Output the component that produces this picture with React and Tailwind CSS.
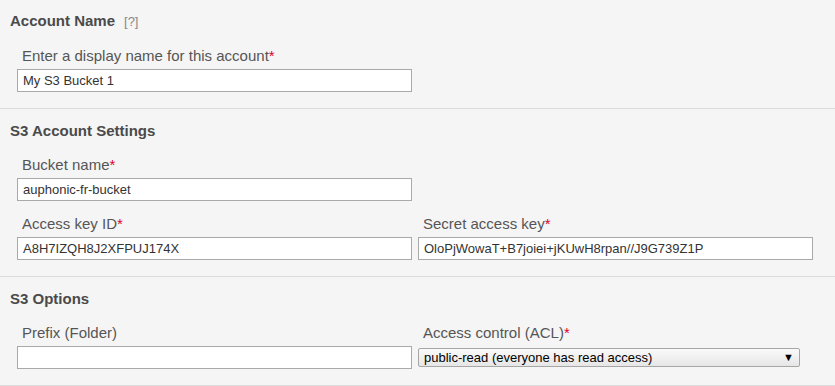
const font = { fontFamily: '"Liberation Sans", Arial, sans-serif' };

function Field({ label, required, value, className = "" }) {
  return (
    <div className={"flex w-[395px] flex-col " + className}>
      <div className="pl-[5px] text-[15px] leading-[20px] text-[#555]">
        {label}
        {required && <span className="text-[#e4002b]">*</span>}
      </div>
      <input
        readOnly
        value={value}
        className="mt-[3px] h-[23px] w-full border border-[#a9a9a9] bg-white px-[5px] text-[13px] text-[#333] outline-none"
      />
    </div>
  );
}

function Section({ title, help, children }) {
  return (
    <section className="border-b border-[#dcdcdc] pt-[12px] pb-[16px]">
      <h2 className="flex items-baseline pl-[10px] text-[15px] font-bold leading-[20px] text-[#4a4a4a]">
        {title}
        {help && <span className="ml-[9px] text-[13px] font-normal text-[#888]">[?]</span>}
      </h2>
      <div className="mt-[14px] flex flex-col gap-[13px] pl-[17px]">{children}</div>
    </section>
  );
}

export default function App() {
  return (
    <div className="h-[386px] w-[835px] overflow-hidden bg-[#f5f5f5]" style={font}>
      <div className="-mt-px">
        <Section title="Account Name" help>
          <Field label="Enter a display name for this account" required value="My S3 Bucket 1" />
        </Section>
      </div>

      <Section title="S3 Account Settings">
        <Field label="Bucket name" required value="auphonic-fr-bucket" />
        <div className="flex gap-[6px]">
          <Field label="Access key ID" required value="A8H7IZQH8J2XFPUJ174X" />
          <Field label="Secret access key" required value="OloPjWowaT+B7joiei+jKUwH8rpan//J9G739Z1P" />
        </div>
      </Section>

      <Section title="S3 Options">
        <div className="flex gap-[6px]">
          <Field label="Prefix (Folder)" value="" />
          <div className="flex w-[395px] flex-col">
            <div className="pl-[5px] text-[15px] leading-[20px] text-[#555]">
              Access control (ACL)<span className="text-[#e4002b]">*</span>
            </div>
            <div className="mt-[5px] flex h-[19px] w-[382px] items-center justify-between rounded-[2px] border border-[#a6a6a6] bg-gradient-to-b from-[#fafafa] to-[#e6e6e6] pl-[5px] pr-[5px] text-[13px] text-black">
              <span>public-read (everyone has read access)</span>
              <span className="text-[11px] leading-none">▼</span>
            </div>
          </div>
        </div>
      </Section>
    </div>
  );
}
